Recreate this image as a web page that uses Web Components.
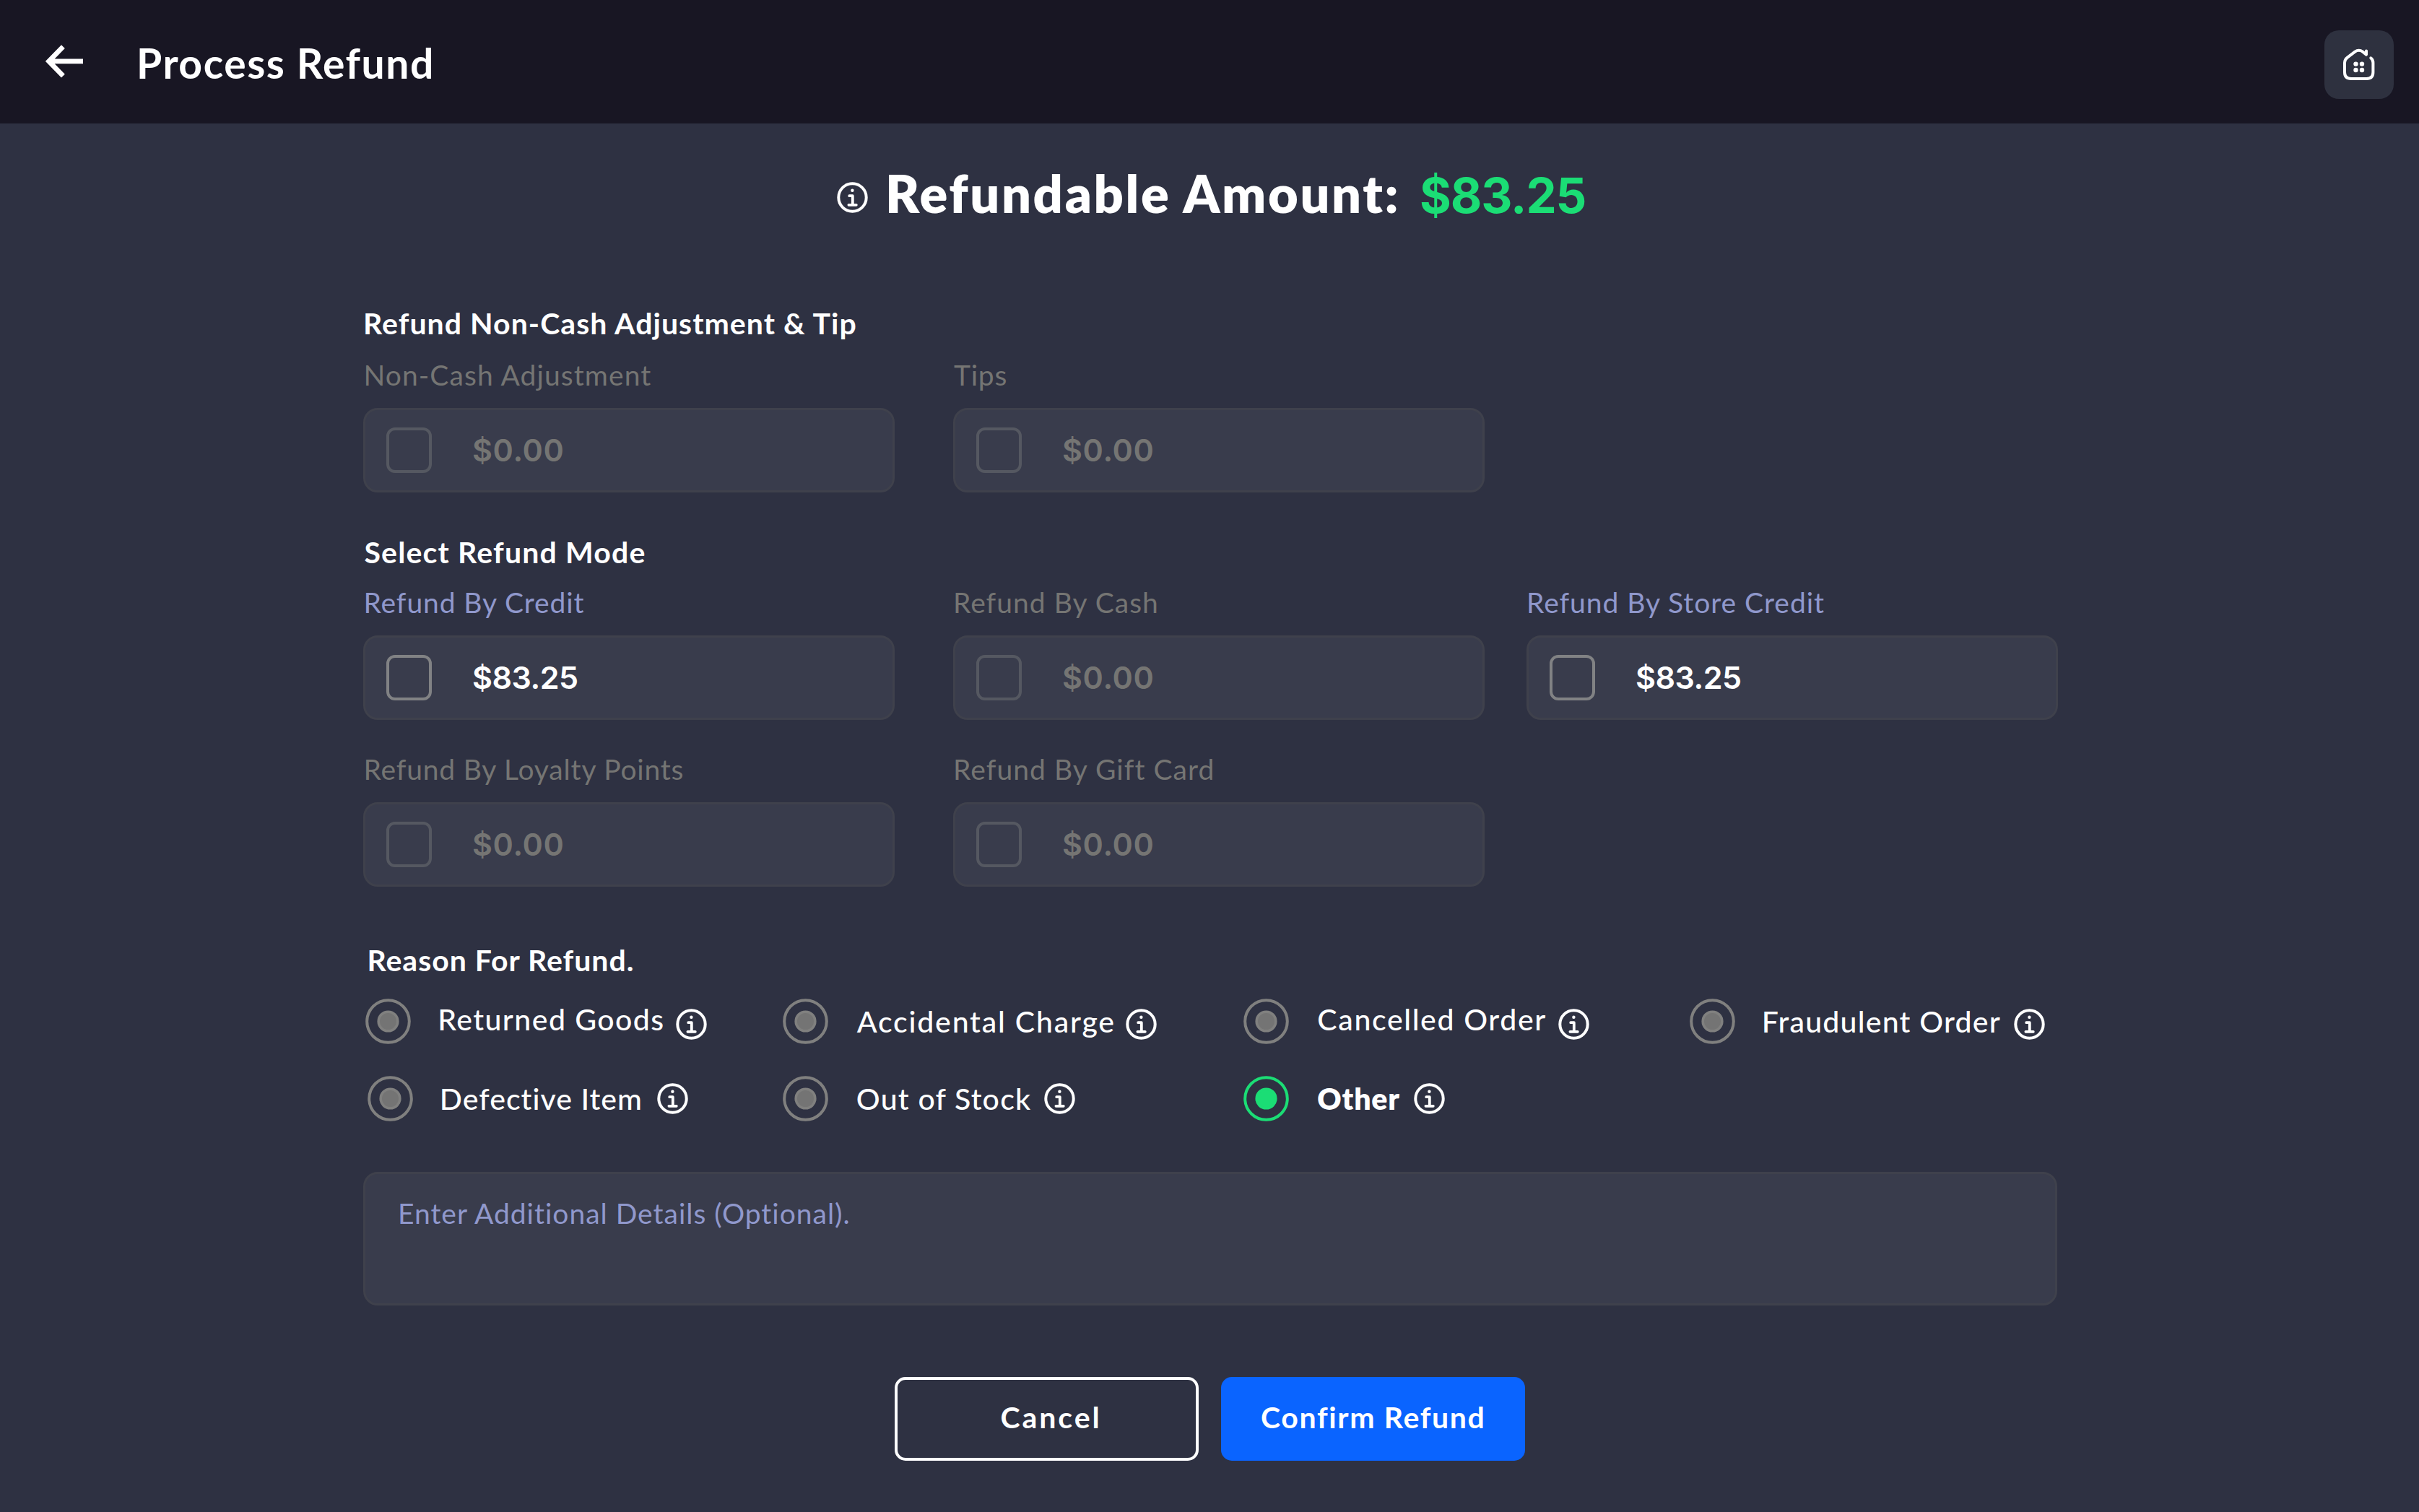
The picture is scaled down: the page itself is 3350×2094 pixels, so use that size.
<!DOCTYPE html>
<html lang="en">
<head>
<meta charset="utf-8">
<title>Process Refund</title>
<style>
html,body{margin:0;padding:0;background:#2e3142}
body{width:3350px;height:2094px;overflow:hidden;font-family:Lato,"Open Sans",sans-serif;color:#fff}
</style>
</head>
<body>
<refund-page></refund-page>
<script>
const pen = document.createElement('canvas').getContext('2d');

/* A single line of text tracked to a measured width. */
class UiText extends HTMLElement {
  connectedCallback() {
    const size = +this.getAttribute('size'), weight = this.getAttribute('weight') || 400, width = +this.getAttribute('width');
    const family = this.hasAttribute('numeric') ? 'Inter' : 'Lato';
    const text = this.textContent;
    pen.font = `${weight} ${size}px ${family}`;
    const m = pen.measureText(text);
    const track = (width - m.actualBoundingBoxLeft - m.actualBoundingBoxRight) / (text.length - 1);
    this.attachShadow({mode: 'open'}).innerHTML = `<style>
      :host{display:block;flex:none;width:${width}px;height:${size}px;font-family:${family},sans-serif;font-size:${size}px;line-height:${size}px;font-weight:${weight};
        letter-spacing:${track.toFixed(3)}px;text-indent:${m.actualBoundingBoxLeft.toFixed(2)}px;white-space:nowrap;font-variant-ligatures:none}
      </style><slot></slot>`;
  }
}
customElements.define('ui-text', UiText);

class InfoIcon extends HTMLElement {
  connectedCallback() {
    this.attachShadow({mode: 'open'}).innerHTML = `<style>:host{display:block;flex:none;width:43px;height:43px}svg{display:block}</style>
      <svg width="43" height="43" viewBox="0 0 43 43" fill="none" stroke="#fff" stroke-width="4" stroke-linecap="round" stroke-linejoin="round">
      <circle cx="21.5" cy="21.5" r="19.2"/><path d="M17.2 19.2h4.6v12.4M16.4 31.8h10.4" stroke-width="3.8"/><circle cx="21.4" cy="11.8" r="2.2" fill="#fff" stroke="none"/></svg>`;
  }
}
customElements.define('info-icon', InfoIcon);

class AppHeader extends HTMLElement {
  connectedCallback() {
    this.attachShadow({mode: 'open'}).innerHTML = `<style>
      :host{display:flex;align-items:center;height:171px;box-sizing:border-box;padding:0 35px 0 63px;background:#181623}
      .back{width:53px;height:46px;margin:0 77px 1px 0}
      .home{margin:7px 0 0 auto;width:96px;height:95px;border-radius:20px;background:#2e313f}
      svg{display:block}
      </style>
      <svg class="back" viewBox="0 0 53 46" fill="none" stroke="#fff" stroke-width="6.8"><path d="M52 22.8H6M24.4 2.6 4.6 22.8 24.4 43.2"/></svg>
      <slot></slot>
      <div class="home"><svg width="96" height="95" viewBox="0 0 96 95" fill="none" stroke="#fff" stroke-width="4" stroke-linecap="round" stroke-linejoin="round">
        <path d="M64.3 38.3Q67.4 40.6 67.4 45V58Q67.4 67 58.4 67H37Q28 67 28 58V45Q28 40.5 31.5 37.8L42.3 29.6Q47.7 25.8 53 29.6L58 33.6V28.6"/>
        <g fill="#fff" stroke="none"><circle cx="43.5" cy="46.6" r="3.2"/><circle cx="52" cy="46.6" r="3.2"/><circle cx="43.5" cy="55" r="3.2"/><circle cx="52" cy="55" r="3.2"/></g>
      </svg></div>`;
  }
}
customElements.define('app-header', AppHeader);

/* Labelled amount box with a checkbox. */
class AmountField extends HTMLElement {
  connectedCallback() {
    const on = this.hasAttribute('active');
    const value = this.getAttribute('value');
    this.attachShadow({mode: 'open'}).innerHTML = `<style>
      :host{display:block;width:736px;color:${on ? '#9098cc' : '#757573'}}
      .box{display:flex;align-items:center;box-sizing:border-box;height:117px;margin-top:26px;padding-left:29px;border:3px solid #3f414c;border-radius:20px;background:#393c4c}
      .check{box-sizing:border-box;width:63px;height:63px;margin-right:57px;border:4px solid ${on ? '#818284' : '#555861'};border-radius:12px}
      .value{color:${on ? '#fff' : '#757573'}}
      </style><slot></slot>
      <div class="box"><div class="check"></div><ui-text numeric class="value" size="43" weight="600" width="${on ? 144 : 124.5}">${value}</ui-text></div>`;
  }
}
customElements.define('amount-field', AmountField);

class ReasonOption extends HTMLElement {
  connectedCallback() {
    const on = this.hasAttribute('checked');
    this.attachShadow({mode: 'open'}).innerHTML = `<style>
      :host{display:flex;align-items:center;height:63px}
      svg{flex:none;display:block;margin-right:40px}
      ::slotted(ui-text){position:relative;top:var(--lift,0px)}
      info-icon{margin-left:var(--gap,19px);margin-top:var(--drop,0px)}
      </style>
      <svg width="63" height="63" viewBox="0 0 63 63"><circle cx="31.5" cy="31.5" r="29.3" fill="none" stroke="${on ? '#1bdd75' : '#80807f'}" stroke-width="4"/>
      <circle cx="31.5" cy="31.5" r="13.3" fill="${on ? '#1bdd75' : '#747474'}" stroke="${on ? '#1bdd75' : '#80807f'}" stroke-width="3.6"/></svg>
      <slot></slot><info-icon></info-icon>`;
  }
}
customElements.define('reason-option', ReasonOption);

class DetailsInput extends HTMLElement {
  connectedCallback() {
    this.attachShadow({mode: 'open'}).innerHTML = `<style>
      :host{display:block;box-sizing:border-box;width:2346px;height:185px;padding:35px 0 0 48px;border:3px solid #3f414c;border-radius:20px;background:#393c4c;color:#9098cc}
      </style><slot></slot>`;
  }
}
customElements.define('details-input', DetailsInput);

class UiButton extends HTMLElement {
  connectedCallback() {
    const primary = this.hasAttribute('primary');
    this.attachShadow({mode: 'open'}).innerHTML = `<style>
      :host{display:flex;align-items:center;justify-content:center;box-sizing:border-box;width:421px;height:116px;padding-bottom:5px;border-radius:15px;
      ${primary ? 'background:#0a64ff;padding-right:3px' : 'border:4px solid #fff;padding-left:8px'}}
      </style><slot></slot>`;
  }
}
customElements.define('ui-button', UiButton);

class RefundPage extends HTMLElement {
  connectedCallback() {
    this.attachShadow({mode: 'open'}).innerHTML = `<style>
      :host{display:block;width:3350px;height:2094px;background:#2e3142}
      .hero{display:flex;align-items:center;box-sizing:border-box;height:190px;padding-left:1159px}
      .hero info-icon{margin:14px 29px 0 0}
      .hero-title{margin-top:2px}
      .amount{color:#1bdd75;margin:8px 0 0 32px}
      main{padding-left:503px;padding-top:66px}
      .head{margin-left:3px}
      .row{display:flex}
      .row amount-field:nth-child(2){margin-left:81px}
      .row amount-field:nth-child(3){margin-left:58px}
      .lab{margin-left:3.5px}
      .reasons{display:grid;grid-template-columns:577.5px 638.5px 617.5px 500px;row-gap:44px;margin:33px 0 0 3.3px}
      .high{--lift:-2.5px}
      .r1{--drop:8px}
      details-input{margin-top:70px}
      .actions{display:flex;gap:31px;margin:99px 0 0 736px}
      </style>
      <app-header><ui-text size="57" weight="700" width="404" style="margin-top:3px">Process Refund</ui-text></app-header>
      <div class="hero"><info-icon></info-icon><ui-text class="hero-title" size="72" weight="800" width="705">Refundable Amount:</ui-text><ui-text numeric class="amount" size="67" weight="700" width="226.5">$83.25</ui-text></div>
      <main>
        <ui-text class="head" size="41" weight="700" width="681">Refund Non-Cash Adjustment &amp; Tip</ui-text>
        <div class="row" style="margin-top:32px">
          <amount-field value="$0.00"><ui-text class="lab" size="39" width="396">Non-Cash Adjustment</ui-text></amount-field>
          <amount-field value="$0.00"><ui-text style="margin-left:1px" size="39" width="72.5">Tips</ui-text></amount-field>
        </div>
        <ui-text class="head" size="41" weight="700" width="388" style="margin:62px 0 0 1.5px">Select Refund Mode</ui-text>
        <div class="row" style="margin-top:30px">
          <amount-field active value="$83.25"><ui-text class="lab" size="39" width="303">Refund By Credit</ui-text></amount-field>
          <amount-field value="$0.00"><ui-text style="margin-left:3px" size="39" width="280">Refund By Cash</ui-text></amount-field>
          <amount-field active value="$83.25"><ui-text style="margin-left:3px" size="39" width="410">Refund By Store Credit</ui-text></amount-field>
        </div>
        <div class="row" style="margin-top:48.5px">
          <amount-field value="$0.00"><ui-text class="lab" size="39" width="441">Refund By Loyalty Points</ui-text></amount-field>
          <amount-field value="$0.00"><ui-text style="margin-left:3px" size="39" width="356.5">Refund By Gift Card</ui-text></amount-field>
        </div>
        <ui-text size="41" weight="700" width="365" style="margin:81px 0 0 8.5px">Reason For Refund.</ui-text>
        <div class="reasons">
          <reason-option class="r1 high" style="--gap:18px"><ui-text size="41" weight="500" width="309">Returned Goods</ui-text></reason-option>
          <reason-option class="r1" style="--gap:17px"><ui-text size="41" weight="500" width="355.5">Accidental Charge</ui-text></reason-option>
          <reason-option class="r1 high" style="--gap:17.5px"><ui-text size="41" weight="500" width="315">Cancelled Order</ui-text></reason-option>
          <reason-option class="r1"><ui-text size="41" weight="500" width="327">Fraudulent Order</ui-text></reason-option>
          <reason-option style="--gap:22.5px;margin-left:2.5px"><ui-text size="41" weight="500" width="276">Defective Item</ui-text></reason-option>
          <reason-option style="--gap:18.5px"><ui-text size="41" weight="500" width="241">Out of Stock</ui-text></reason-option>
          <reason-option checked style="--gap:19.5px"><ui-text size="41" weight="800" width="113">Other</ui-text></reason-option>
        </div>
        <details-input><ui-text size="39" width="625">Enter Additional Details (Optional).</ui-text></details-input>
        <div class="actions">
          <ui-button><ui-text size="41" weight="700" width="134">Cancel</ui-text></ui-button>
          <ui-button primary><ui-text size="41" weight="700" width="306">Confirm Refund</ui-text></ui-button>
        </div>
      </main>`;
  }
}
customElements.define('refund-page', RefundPage);
</script>
</body>
</html>
